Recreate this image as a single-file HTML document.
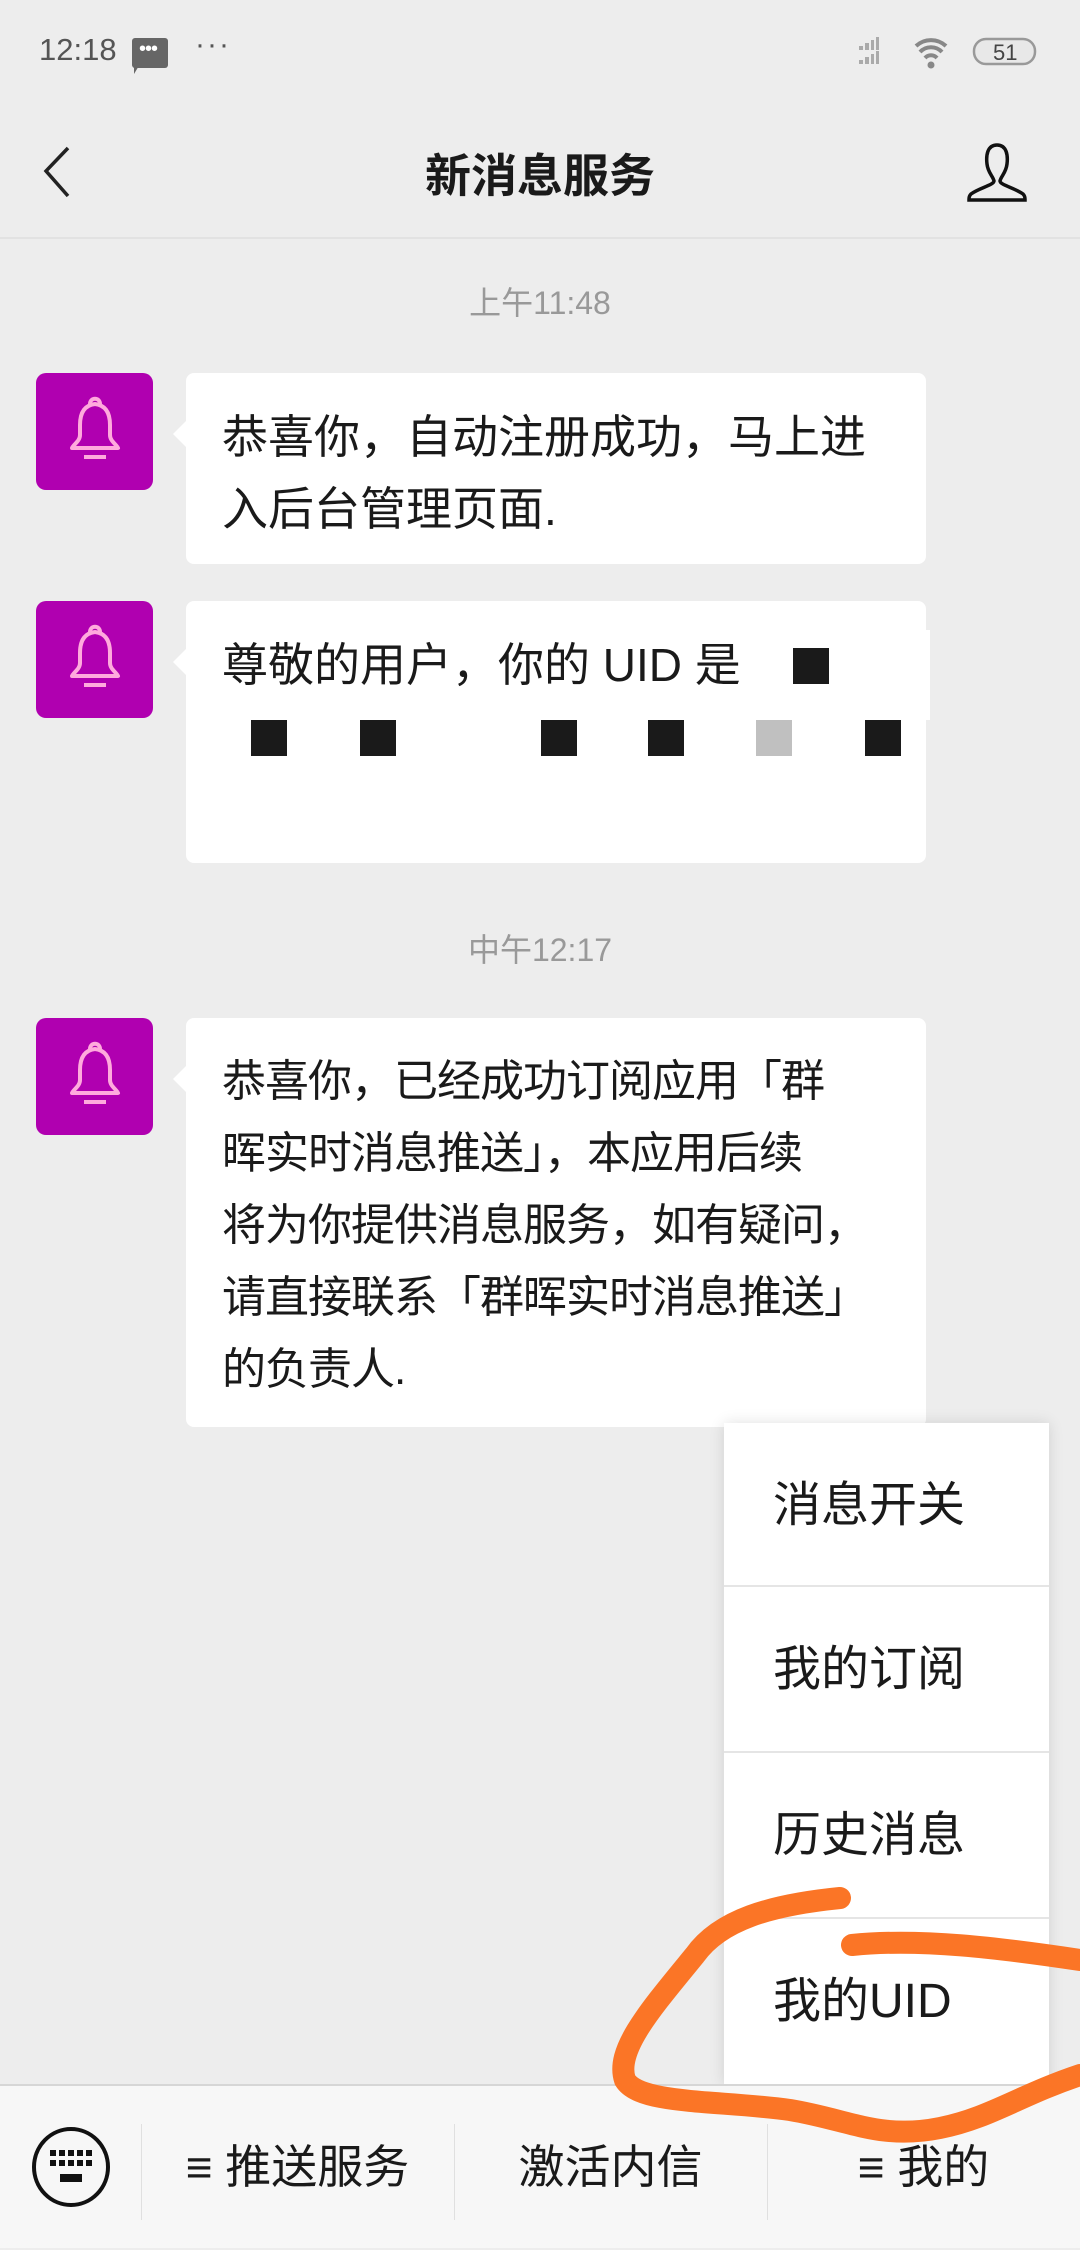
<!DOCTYPE html>
<html><head><meta charset="utf-8"><style>
*{margin:0;padding:0;box-sizing:border-box}
body{width:1080px;height:2248px;background:#ededed;position:relative;overflow:hidden;font-family:"Liberation Sans","Noto Sans CJK SC",sans-serif;color:#1a1a1a}
.abs{position:absolute}
.av{position:absolute;left:36px;width:117px;height:117px;background:#b000b0;border-radius:10px}
.bub{position:absolute;left:186px;width:740px;background:#fff;border-radius:8px;font-size:46px;line-height:72px;padding:28px 0 0 36px;white-space:nowrap}
.bub:before{content:"";position:absolute;left:-13px;top:48px;border:13px solid transparent;border-left:0;border-right-color:#fff}
.ts{position:absolute;width:1080px;text-align:center;font-size:32px;color:#999}
.mi{position:absolute;left:0;width:325px;height:166px;font-size:48px;line-height:166px;padding-left:49px;border-top:2px solid #e5e5e5}
.blk{position:absolute;width:36px;height:36px;background:#1a1a1a}
.bt{position:absolute;top:2084px;font-size:46px;text-align:center;line-height:166px}
.sep{position:absolute;top:2124px;width:1px;height:96px;background:#e0e0e0}
</style></head><body>
<!-- status bar -->
<div class="abs" style="left:39px;top:32px;font-size:31px;color:#555">12:18</div>
<div class="abs" style="left:132px;top:38px;width:36px;height:30px;background:#666;border-radius:3px"></div>
<div class="abs" style="left:134px;top:64px;width:0;height:0;border-left:6px solid #666;border-bottom:10px solid transparent"></div>
<div class="abs" style="left:139px;top:38px;font-size:20px;color:#fff;letter-spacing:-1px">•••</div>
<div class="abs" style="left:195px;top:28px;font-size:30px;color:#555;letter-spacing:2px">···</div>
<svg class="abs" style="left:855px;top:34px" width="190" height="40">
<g fill="#aaa"><rect x="4" y="12" width="4" height="4"/><rect x="10" y="9" width="4" height="7"/><rect x="16" y="6" width="3" height="10"/><rect x="21" y="3" width="3" height="13"/>
<rect x="4" y="26" width="4" height="4"/><rect x="10" y="23" width="4" height="7"/><rect x="16" y="20" width="3" height="10"/><rect x="21" y="17" width="3" height="13"/></g>
<path d="M61 12 a22 22 0 0 1 30 0 M65 18 a15 15 0 0 1 22 0 M70 24 a8 8 0 0 1 12 0" stroke="#888" stroke-width="4" fill="none"/>
<circle cx="76" cy="31" r="3.5" fill="#888"/>
<rect x="119" y="5" width="61" height="25" rx="12" fill="#e8e8e8" stroke="#999" stroke-width="2.5"/>
<text x="138" y="26" font-size="22" fill="#444" font-family="Liberation Sans">51</text></svg>
<!-- nav -->
<svg class="abs" style="left:40px;top:140px" width="40" height="60"><path d="M28 8 L6 31 L28 56" stroke="#222" stroke-width="3.5" fill="none"/></svg>
<div class="abs" style="left:0;width:1080px;top:140px;text-align:center;font-size:46px;font-weight:bold">新消息服务</div>
<svg class="abs" style="left:965px;top:140px" width="64" height="64"><path d="M32 5 C22 5 21 16 22 24 C23 33 28 36 29 41 C29 45 14 48 6 54 Q4 56 4 59 L4 60 L60 60 L60 59 Q60 56 58 54 C50 48 35 45 35 41 C36 36 41 33 42 24 C43 16 42 5 32 5Z" stroke="#111" stroke-width="3.5" fill="none"/></svg>
<div class="abs" style="left:0;top:237px;width:1080px;height:2px;background:#e2e2e2"></div>

<div class="ts" style="top:278px">上午11:48</div>
<svg width="0" height="0" style="position:absolute"><defs><g id="bell"><path d="M44 62 L44 52 C44 38 50 32 59 31 C68 32 74 38 74 52 L74 62 C74 68 80 71 82 75 L36 75 C38 71 44 68 44 62Z" stroke="#fad" stroke-width="4" fill="none" stroke-linejoin="round"/><path d="M54 31 C54 24 64 24 64 31" stroke="#fad" stroke-width="4" fill="none"/><path d="M48 84 L70 84" stroke="#fad" stroke-width="4"/></g></defs></svg>
<div class="av" style="top:373px"><svg width="117" height="117"><use href="#bell"/></svg></div>
<div class="bub" style="top:373px;height:191px">恭喜你，自动注册成功，马上进<br>入后台管理页面.</div>

<div class="av" style="top:601px"><svg width="117" height="117"><use href="#bell"/></svg></div>
<div class="bub" style="top:601px;height:262px">尊敬的用户，你的 UID 是</div>
<div class="abs" style="left:750px;top:630px;width:180px;height:90px;background:#fff"></div>
<div class="blk" style="left:793px;top:648px"></div>
<div class="blk" style="left:251px;top:720px"></div>
<div class="blk" style="left:360px;top:720px"></div>
<div class="blk" style="left:541px;top:720px"></div>
<div class="blk" style="left:648px;top:720px"></div>
<div class="blk" style="left:756px;top:720px;background:#c0c0c0"></div>
<div class="blk" style="left:865px;top:720px"></div>

<div class="ts" style="top:925px">中午12:17</div>
<div class="av" style="top:1018px"><svg width="117" height="117"><use href="#bell"/></svg></div>
<div class="bub" style="top:1018px;height:409px;font-size:44px;letter-spacing:-1px">恭喜你，已经成功订阅应用「群<br>晖实时消息推送」，本应用后续<br>将为你提供消息服务，如有疑问，<br>请直接联系「群晖实时消息推送」<br>的负责人.</div>

<!-- menu -->
<div class="abs" style="left:724px;top:1423px;width:325px;height:662px;background:#fff;box-shadow:0 0 14px rgba(0,0,0,.12)">
<div class="mi" style="top:0;border-top:0">消息开关</div>
<div class="mi" style="top:162px">我的订阅</div>
<div class="mi" style="top:328px">历史消息</div>
<div class="mi" style="top:494px">我的UID</div>
</div>

<!-- bottom bar -->
<div class="abs" style="left:0;top:2084px;width:1080px;height:164px;background:#f7f7f7;border-top:2px solid #d6d6d6"></div>
<svg class="abs" style="left:30px;top:2125px" width="84" height="84"><ellipse cx="41" cy="42" rx="37" ry="38" stroke="#111" stroke-width="4" fill="none"/>
<g fill="#111"><rect x="20" y="25" width="6" height="6"/><rect x="29" y="25" width="6" height="6"/><rect x="38" y="25" width="6" height="6"/><rect x="47" y="25" width="6" height="6"/><rect x="56" y="25" width="6" height="6"/>
<rect x="20" y="35" width="6" height="6"/><rect x="29" y="35" width="6" height="6"/><rect x="38" y="35" width="6" height="6"/><rect x="47" y="35" width="6" height="6"/><rect x="56" y="35" width="6" height="6"/>
<rect x="30" y="49" width="22" height="8"/></g></svg>
<div class="sep" style="left:141px"></div><div class="sep" style="left:454px"></div><div class="sep" style="left:767px"></div>
<div class="bt" style="left:141px;width:313px">≡ 推送服务</div>
<div class="bt" style="left:454px;width:313px">激活内信</div>
<div class="bt" style="left:767px;width:313px">≡ 我的</div>

<!-- orange annotation -->
<svg class="abs" style="left:0;top:0" width="1080" height="2248"><g stroke="#fb7526" stroke-width="22" fill="none" stroke-linecap="round">
<path d="M840 1898 C770 1905 720 1920 695 1955 C650 2010 615 2050 625 2080 C640 2105 720 2100 790 2110 C850 2120 880 2140 940 2128 C990 2118 1020 2095 1080 2075"/>
<path d="M852 1945 C920 1938 1000 1948 1080 1960"/></g></svg>
</body></html>
